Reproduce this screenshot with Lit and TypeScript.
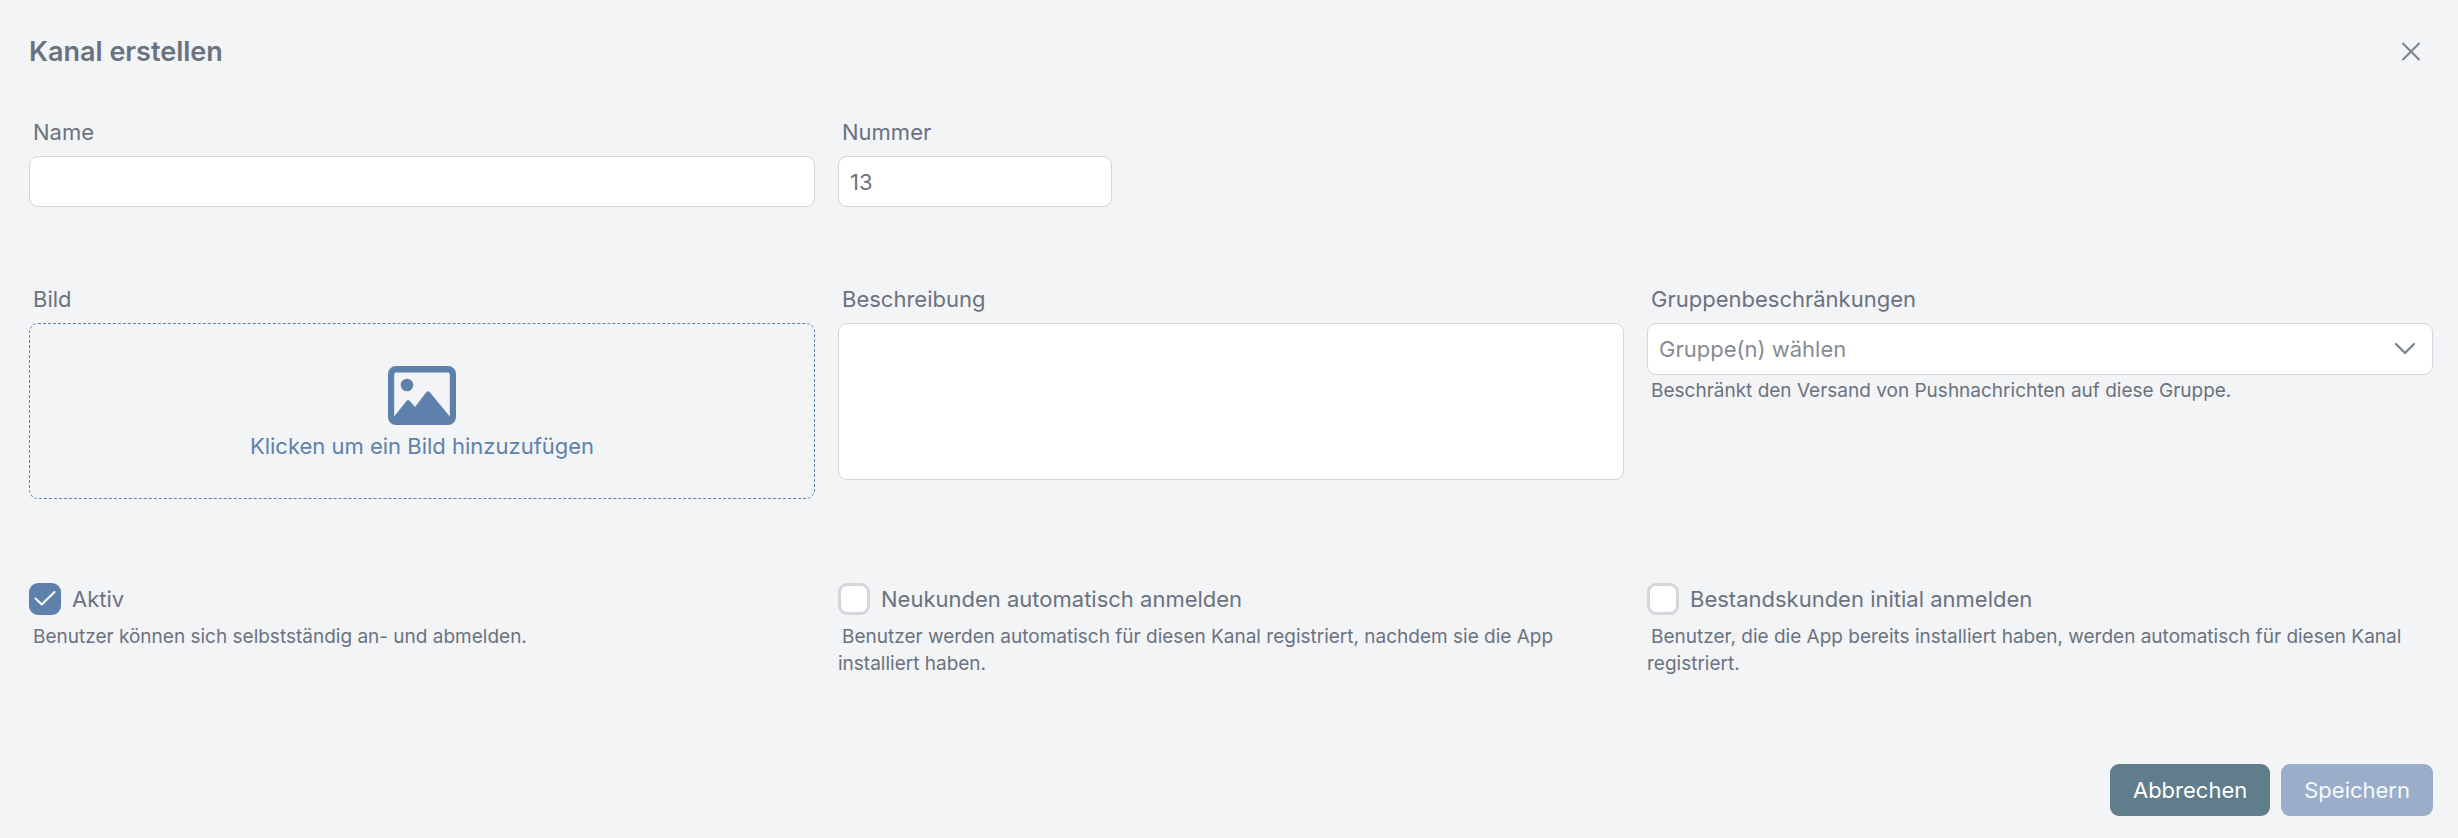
import { LitElement, html, css, nothing } from "lit";
import { customElement, property, state } from "lit/decorators.js";

@customElement("channel-toggle")
class ChannelToggle extends LitElement {
  @property() label = "";
  @property() hint = "";
  @property({ type: Boolean }) checked = false;

  static styles = css`
    :host {
      display: block;
    }
    .line {
      display: flex;
      align-items: center;
      gap: 11px;
      height: 32px;
    }
    .box {
      display: grid;
      width: 32px;
      height: 32px;
    }
    .box > * {
      grid-area: 1 / 1;
    }
    .input {
      appearance: none;
      box-sizing: border-box;
      width: 32px;
      height: 32px;
      margin: 0;
      border: 3px solid #d3d6da;
      border-radius: 9px;
      background: #fff;
    }
    .input:checked {
      border-color: #5e81ac;
      background: #5e81ac;
    }
    .tick {
      pointer-events: none;
    }
    .text {
      font-size: 22px;
      line-height: 32px;
    }
    .hint {
      margin: 8px 0 0;
      text-indent: 4px;
      font-size: 19px;
      line-height: 27px;
    }
  `;

  private onChange(e: Event) {
    this.checked = (e.target as HTMLInputElement).checked;
  }

  render() {
    return html`
      <div class="line">
        <span class="box">
          <input class="input" id="toggle" type="checkbox" aria-describedby="hint"
            .checked=${this.checked} @change=${this.onChange} />
          ${this.checked
            ? html`<svg class="tick" width="32" height="32" viewBox="0 0 32 32" fill="none" stroke="#fff"
                stroke-width="2" stroke-linecap="round" stroke-linejoin="round" aria-hidden="true">
                <path d="M6.500 15.500L12.800 21.500L25.500 9" />
              </svg>`
            : nothing}
        </span>
        <label class="text" for="toggle">${this.label}</label>
      </div>
      <p class="hint" id="hint">${this.hint}</p>
    `;
  }
}

@customElement("app-root")
class AppRoot extends LitElement {
  @state() private toggles = [
    { label: "Aktiv", hint: "Benutzer können sich selbstständig an- und abmelden.", checked: true },
    {
      label: "Neukunden automatisch anmelden",
      hint: "Benutzer werden automatisch für diesen Kanal registriert, nachdem sie die App installiert haben.",
      checked: false,
    },
    {
      label: "Bestandskunden initial anmelden",
      hint: "Benutzer, die die App bereits installiert haben, werden automatisch für diesen Kanal registriert.",
      checked: false,
    },
  ];

  static styles = css`
    :host {
      display: block;
      box-sizing: border-box;
      min-height: 100vh;
      padding: 30px 25px 22px 29px;
      background: #f2f4f6;
      color: #6b727f;
      font-family: Inter, "Noto Sans", sans-serif;
      font-size: 22px;
    }
    .header {
      display: flex;
      align-items: center;
      justify-content: space-between;
      height: 44px;
    }
    .title {
      margin: 0;
      font-size: 27px;
      font-weight: 600;
      line-height: 44px;
    }
    .close {
      display: grid;
      place-items: center;
      width: 44px;
      height: 40px;
      padding: 0;
      border: 0;
      background: none;
      color: #7b828c;
    }
    .grid {
      display: grid;
      grid-template-columns: repeat(3, minmax(0, 1fr));
      column-gap: 23px;
      align-items: start;
    }
    .basics {
      margin-top: 41px;
    }
    .details {
      margin-top: 75px;
    }
    .toggles {
      margin-top: 84px;
    }
    .field {
      display: flex;
      flex-direction: column;
    }
    .label {
      padding: 0 4px 7px;
      line-height: 34px;
    }
    .control {
      box-sizing: border-box;
      width: 100%;
      height: 51px;
      margin: 0;
      padding: 0 11px;
      border: 1px solid #d3d6da;
      border-radius: 9px;
      background: #fff;
      color: inherit;
      font: inherit;
    }
    .number {
      width: 274px;
    }
    .area {
      height: 157px;
      padding: 8px 11px;
      resize: none;
    }
    .drop {
      display: flex;
      flex-direction: column;
      align-items: center;
      justify-content: center;
      gap: 4px;
      box-sizing: border-box;
      width: 100%;
      height: 176px;
      margin: 0;
      padding: 6px 0 0;
      border: 1px dashed #5e81ac;
      border-radius: 9px;
      background: none;
      color: #5e81ac;
      font: inherit;
      line-height: 34px;
    }
    .picker {
      display: grid;
      align-items: center;
    }
    .picker > * {
      grid-area: 1 / 1;
    }
    .select {
      appearance: none;
      height: 52px;
      color: #868b93;
    }
    .chevron {
      justify-self: end;
      margin-right: 17px;
      pointer-events: none;
    }
    .hint {
      margin: 2px 0 0;
      text-indent: 4px;
      font-size: 19px;
      line-height: 27px;
    }
    .footer {
      display: flex;
      justify-content: flex-end;
      gap: 11px;
      margin-top: 87px;
    }
    .button {
      height: 52px;
      padding: 0 23px;
      border: 0;
      border-radius: 9px;
      color: #fff;
      font: inherit;
    }
    .cancel {
      background: #607d8b;
    }
    .save {
      background: #9aaeca;
      color: #f6f8fb;
    }
  `;

  render() {
    return html`
      <header class="header">
        <h1 class="title">Kanal erstellen</h1>
        <button class="close" type="button" aria-label="Schließen">
          <svg width="20" height="20" viewBox="0 0 20 20" fill="none" stroke="currentColor"
            stroke-width="2" stroke-linecap="round" aria-hidden="true">
            <path d="M2 1.500L18 17.500M18 1.500L2 17.500" />
          </svg>
        </button>
      </header>
      <form @submit=${(e: Event) => e.preventDefault()}>
        <div class="grid basics">
          <div class="field">
            <label class="label" for="name">Name</label>
            <input class="control" id="name" type="text" />
          </div>
          <div class="field">
            <label class="label" for="number">Nummer</label>
            <input class="control number" id="number" type="text" inputmode="numeric" value="13" />
          </div>
        </div>
        <div class="grid details">
          <div class="field">
            <label class="label" for="image">Bild</label>
            <button class="drop" id="image" type="button">
              <svg width="68" height="59" viewBox="0 0 68 59" fill="currentColor" aria-hidden="true">
                <path fill-rule="evenodd" d="M8 0H60A8 8 0 0 1 68 8V51A8 8 0 0 1 60 59H8A8 8 0 0 1 0 51V8A8 8 0 0 1 8 0ZM8 6.500A2 2 0 0 0 6.200 8.500V50.500L18 35.500Q20 32.500 22.300 35.500L27 41L37.500 27.200Q40 23.500 42.700 27.200L61.800 50.500V8.500A2 2 0 0 0 60 6.500Z" />
                <circle cx="19" cy="19" r="6.300" />
              </svg>
              <span>Klicken um ein Bild hinzuzufügen</span>
            </button>
          </div>
          <div class="field">
            <label class="label" for="description">Beschreibung</label>
            <textarea class="control area" id="description"></textarea>
          </div>
          <div class="field">
            <label class="label" for="groups">Gruppenbeschränkungen</label>
            <div class="picker">
              <select class="control select" id="groups" aria-describedby="groups-hint">
                <option>Gruppe(n) wählen</option>
              </select>
              <svg class="chevron" width="22" height="14" viewBox="0 0 22 14" fill="none" stroke="#7f868f"
                stroke-width="2.400" stroke-linecap="round" stroke-linejoin="round" aria-hidden="true">
                <path d="M2 2L11 11L20 2" />
              </svg>
            </div>
            <p class="hint" id="groups-hint">Beschränkt den Versand von Pushnachrichten auf diese Gruppe.</p>
          </div>
        </div>
        <div class="grid toggles">
          ${this.toggles.map(
            (t) => html`<channel-toggle .label=${t.label} .hint=${t.hint} .checked=${t.checked}></channel-toggle>`
          )}
        </div>
        <footer class="footer">
          <button class="button cancel" type="button">Abbrechen</button>
          <button class="button save" type="submit" disabled>Speichern</button>
        </footer>
      </form>
    `;
  }
}
